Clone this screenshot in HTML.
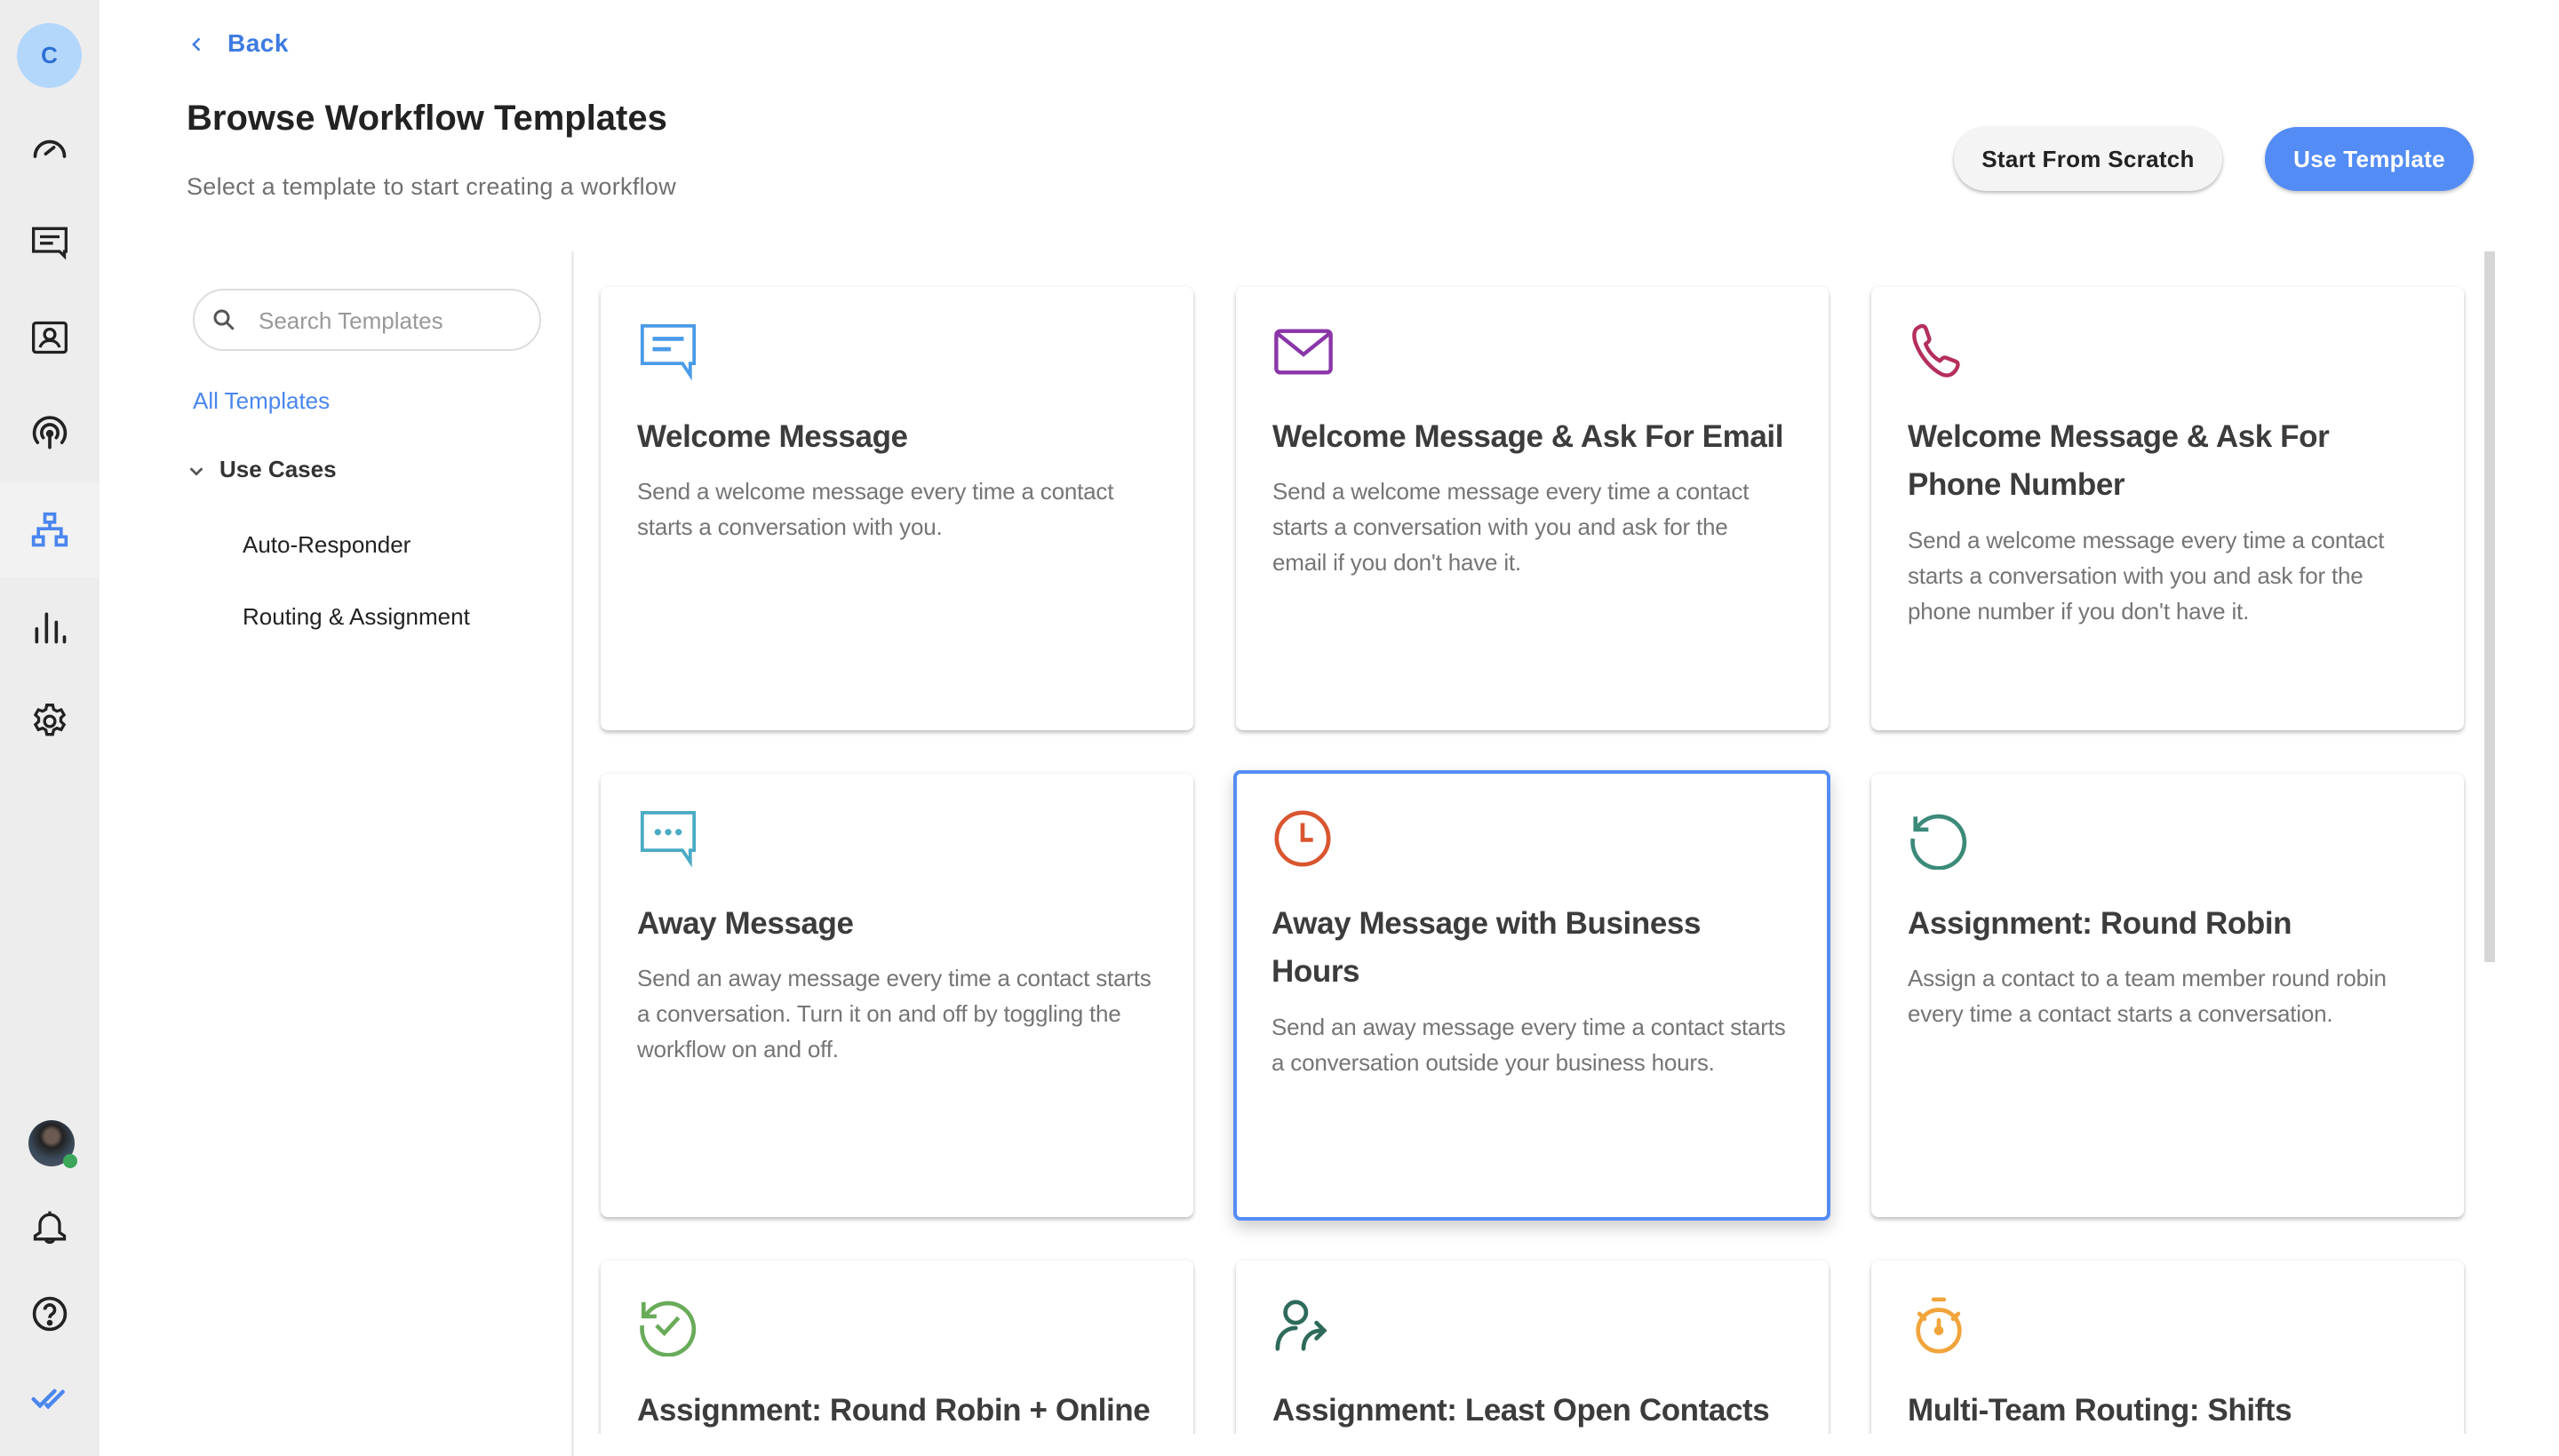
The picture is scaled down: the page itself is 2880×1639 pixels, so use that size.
<!DOCTYPE html>
<html><head><meta charset="utf-8">
<style>
*{box-sizing:border-box;margin:0;padding:0}
html,body{width:2880px;height:1639px;overflow:hidden;background:#fff;font-family:"Liberation Sans",sans-serif}
#root{position:relative;width:2880px;height:1639px;overflow:hidden}
.side{position:absolute;left:0;top:0;width:112px;height:1639px;background:#ededed}
.act{position:absolute;left:0;top:544px;width:112px;height:106px;background:#f2f2f2}
.ic{position:absolute;left:34px;width:44px;height:44px}
.av{position:absolute;left:19px;top:26px;width:73px;height:73px;border-radius:50%;background:#b3d7fb;color:#2d6fd6;font-size:26px;font-weight:bold;text-align:center;line-height:73px}
.t{position:absolute;white-space:nowrap}
.btn{position:absolute;top:143px;height:72px;border-radius:36px;font-size:26px;font-weight:bold;text-align:center;line-height:72px;letter-spacing:.3px}
.card{position:absolute;width:667px;height:499px;background:#fff;border-radius:8px;box-shadow:0 3px 5px rgba(0,0,0,.22),0 0 6px rgba(0,0,0,.06);padding:0 41px;overflow:hidden}
.card svg{position:absolute;left:41px;top:38px;width:70px;height:70px}
.card h3{position:absolute;left:41px;top:142px;font-size:35px;line-height:54px;font-weight:bold;color:#3c3c3c;letter-spacing:-.4px;white-space:nowrap}
.card p{position:absolute;left:41px;font-size:26px;line-height:40px;color:#757575;letter-spacing:-.2px;white-space:nowrap}
.sel{border:4px solid #548cf5;box-shadow:0 8px 18px rgba(0,0,0,.2)}
</style></head><body><div id="root">
<div class="side">
<div class="av">C</div>
<div class="act"></div>
<svg class="ic" style="top:143px" viewBox="0 0 24 24" fill="none" stroke="#222" stroke-width="2" stroke-linecap="round"><path d="M3 18a9 9 0 1 1 18 0"/><path d="M9.5 16.5l5-4"/></svg>
<svg class="ic" style="top:250px" viewBox="0 0 24 24" fill="none" stroke="#222" stroke-width="1.8"><path d="M2 4h20v14h-1v3l-3-3H2z"/><path d="M6 9h12M6 13h8"/></svg>
<svg class="ic" style="top:358px" viewBox="0 0 24 24" fill="none" stroke="#222" stroke-width="1.8"><rect x="2" y="3" width="20" height="18" rx="1.5"/><circle cx="12" cy="10" r="3.2"/><path d="M6 18c1-3 3.5-4.2 6-4.2s5 1.2 6 4.2"/></svg>
<svg class="ic" style="top:467px" viewBox="0 0 24 24" fill="none" stroke="#222" stroke-width="2" stroke-linecap="round"><path d="M4.5 17a9.5 9.5 0 1 1 15 0"/><path d="M8 14a5 5 0 1 1 8 0"/><circle cx="12" cy="11.5" r="1.3" fill="#222"/><path d="M12 12v8"/></svg>
<svg class="ic" style="top:575px" viewBox="0 0 24 24" fill="none" stroke="#4a86ee" stroke-width="2"><rect x="9" y="2" width="6" height="5"/><rect x="2" y="16" width="6" height="5"/><rect x="16" y="16" width="6" height="5"/><path d="M12 7v4M5 16v-5h14v5"/></svg>
<svg class="ic" style="top:684px" viewBox="0 0 24 24" fill="none" stroke="#222" stroke-width="2" stroke-linecap="round"><path d="M4 21v-8M10 21V4M16 21v-12M21 21v-3"/></svg>
<svg class="ic" style="top:790px" viewBox="0 0 24 24" fill="none" stroke="#222" stroke-width="1.8"><circle cx="12" cy="12" r="3.2"/><path d="M10.2 2h3.6l.6 2.7 2 1.1 2.6-.9 1.8 3.1-2 1.9v2.2l2 1.9-1.8 3.1-2.6-.9-2 1.1-.6 2.7h-3.6l-.6-2.7-2-1.1-2.6.9-1.8-3.1 2-1.9v-2.2l-2-1.9 1.8-3.1 2.6.9 2-1.1z"/></svg>
<div style="position:absolute;left:32px;top:1261px;width:52px;height:52px;border-radius:50%;background:radial-gradient(circle at 50% 35%,#6a5a50 0 18%,#222 30%,#3a4a5a 60%,#556 100%)"></div>
<div style="position:absolute;left:71px;top:1299px;width:16px;height:16px;border-radius:50%;background:#3ca65a"></div>
<svg class="ic" style="top:1360px" viewBox="0 0 24 24" fill="none" stroke="#222" stroke-width="1.8"><path d="M12 2v2M6 15V10a6 6 0 0 1 12 0v5l3 2v2H3v-2z"/><path d="M9.5 19a2.5 2 0 0 0 5 0"/></svg>
<svg class="ic" style="top:1457px" viewBox="0 0 24 24" fill="none" stroke="#222" stroke-width="2"><circle cx="12" cy="12" r="9.5"/><path d="M9 9.5a3 3 0 1 1 4.5 2.6c-1 .6-1.5 1.2-1.5 2.4"/><circle cx="12" cy="17.5" r=".8" fill="#222"/></svg>
<svg class="ic" style="top:1553px" viewBox="0 0 24 24" fill="none" stroke="#4a86ee" stroke-width="2.4" stroke-linecap="round"><path d="M2 12l4 4 9-9M10 15.5l1 1 9-9"/></svg>
</div>

<svg style="position:absolute;left:212px;top:40px;width:20px;height:20px" viewBox="0 0 24 24" fill="none" stroke="#3d7be0" stroke-width="3"><path d="M15 4l-8 8 8 8"/></svg>
<div class="t" style="left:256px;top:33px;font-size:28px;color:#3d7be0;font-weight:bold;letter-spacing:.5px">Back</div>
<div class="t" style="left:210px;top:111px;font-size:40px;color:#222;font-weight:bold">Browse Workflow Templates</div>
<div class="t" style="left:210px;top:195px;font-size:27px;color:#707070;letter-spacing:.3px">Select a template to start creating a workflow</div>

<div class="btn" style="left:2199px;width:302px;background:#f4f4f4;color:#222;box-shadow:0 2px 4px rgba(0,0,0,.3)">Start From Scratch</div>
<div class="btn" style="left:2549px;width:235px;background:#548cf5;color:#fff;box-shadow:0 2px 4px rgba(0,0,0,.25)">Use Template</div>

<div style="position:absolute;left:643px;top:283px;width:3px;height:1356px;background:#ececec"></div>
<div style="position:absolute;left:217px;top:325px;width:392px;height:70px;border:2px solid #dcdcdc;border-radius:35px"></div>
<svg style="position:absolute;left:237px;top:345px;width:30px;height:30px" viewBox="0 0 24 24" fill="none" stroke="#555" stroke-width="2.4"><circle cx="10" cy="10" r="6"/><path d="M14.5 14.5l6 6"/></svg>
<div class="t" style="left:291px;top:346px;font-size:26px;color:#999">Search Templates</div>
<div class="t" style="left:217px;top:436px;font-size:26px;color:#4a86ee">All Templates</div>
<svg style="position:absolute;left:210px;top:519px;width:22px;height:22px" viewBox="0 0 24 24" fill="none" stroke="#555" stroke-width="3"><path d="M5 9l7 7 7-7"/></svg>
<div class="t" style="left:247px;top:513px;font-size:26px;color:#333;font-weight:bold">Use Cases</div>
<div class="t" style="left:273px;top:598px;font-size:26px;color:#222">Auto-Responder</div>
<div class="t" style="left:273px;top:679px;font-size:26px;color:#222">Routing &amp; Assignment</div>

<div style="position:absolute;left:2796px;top:283px;width:12px;height:800px;background:#d6d6d6"></div>

<div class="card" style="left:676px;top:323px">
<svg viewBox="0 0 24 24" fill="none" stroke="#4a9be8" stroke-width="1.3"><path d="M2 2h20v14.5h-1.5V21l-3-4.5H2z"/><path d="M6 7h12M6 11h7" stroke-width="1.6"/></svg>
<h3>Welcome Message</h3><p style="top:210px">Send a welcome message every time a contact<br>starts a conversation with you.</p></div>
<div class="card" style="left:1391px;top:323px">
<svg viewBox="0 0 24 24" fill="none" stroke="#8a35a8" stroke-width="1.5"><rect x="1.5" y="4" width="21" height="16" rx="1.5"/><path d="M2 5l10 8 10-8"/></svg>
<h3>Welcome Message &amp; Ask For Email</h3><p style="top:210px">Send a welcome message every time a contact<br>starts a conversation with you and ask for the<br>email if you don't have it.</p></div>
<div class="card" style="left:2106px;top:323px">
<svg viewBox="0 0 24 24" fill="none" stroke="#b52f5a" stroke-width="1.5" stroke-linejoin="round"><path d="M3.5 3c2-1.5 3-1 3.5 0l1.3 3.8c.3 1-.5 1.5-1.4 2.2 1 2.7 3 5 5.5 6.5.8-.8 1.4-1.6 2.4-1.2l3.7 1.4c1 .4 1.3 1.5 0 3.4-1.5 2.2-3.5 2.4-5.5 1.5C9 18.5 5 14 3 8.5 2.3 6.3 2.3 4 3.5 3z"/></svg>
<h3>Welcome Message &amp; Ask For<br>Phone Number</h3><p style="top:265px">Send a welcome message every time a contact<br>starts a conversation with you and ask for the<br>phone number if you don't have it.</p></div>

<div class="card" style="left:676px;top:871px">
<svg viewBox="0 0 24 24" fill="none" stroke="#4aabc4" stroke-width="1.3"><path d="M2 2h20v14.5h-1.5V21l-3-4.5H2z"/><circle cx="8" cy="9.5" r=".6" fill="#4aabc4"/><circle cx="12" cy="9.5" r=".6" fill="#4aabc4"/><circle cx="16" cy="9.5" r=".6" fill="#4aabc4"/></svg>
<h3>Away Message</h3><p style="top:210px">Send an away message every time a contact starts<br>a conversation. Turn it on and off by toggling the<br>workflow on and off.</p></div>
<div class="card sel" style="left:1388px;top:867px;width:672px;height:507px;padding:0">
<svg viewBox="0 0 24 24" fill="none" stroke="#d9552f" stroke-width="1.6" style="left:39px;top:38px"><circle cx="12" cy="12" r="10"/><path d="M12 6v6.5h4"/></svg>
<h3 style="left:39px">Away Message with Business<br>Hours</h3><p style="left:39px;top:265px">Send an away message every time a contact starts<br>a conversation outside your business hours.</p></div>
<div class="card" style="left:2106px;top:871px">
<svg viewBox="0 0 24 24" fill="none" stroke="#3b8a7a" stroke-width="1.6"><path d="M3.5 8A10 10 0 1 1 2 12"/><path d="M3 3.5v5h5"/></svg>
<h3>Assignment: Round Robin</h3><p style="top:210px">Assign a contact to a team member round robin<br>every time a contact starts a conversation.</p></div>

<div class="card" style="left:676px;top:1419px;height:260px">
<svg viewBox="0 0 24 24" fill="none" stroke="#6aab5a" stroke-width="1.6"><path d="M3.5 8A10 10 0 1 1 2 12"/><path d="M2.5 3v5.5h5"/><path d="M7.5 12l3 3 5.5-6"/></svg>
<h3>Assignment: Round Robin + Online</h3></div>
<div class="card" style="left:1391px;top:1419px;height:260px">
<svg viewBox="0 0 24 24" fill="none" stroke="#2e6a5a" stroke-width="1.6" stroke-linecap="round"><circle cx="9" cy="7" r="4"/><path d="M2 21c0-5 3-8 7-8"/><path d="M12 21c0-4 2.5-7 7-7"/><path d="M17 11l3 3-3 3"/></svg>
<h3>Assignment: Least Open Contacts</h3></div>
<div class="card" style="left:2106px;top:1419px;height:260px">
<svg viewBox="0 0 24 24" fill="none" stroke="#f0a43a" stroke-width="1.6" stroke-linecap="round"><circle cx="12" cy="14" r="8"/><path d="M10 2h4M12 10v4M4.5 7.5l2 2M19.5 7.5l-2 2"/><circle cx="12" cy="14" r="1" fill="#f0a43a"/></svg>
<h3>Multi-Team Routing: Shifts</h3></div>
<div style="position:absolute;left:650px;top:1614px;width:2230px;height:25px;background:#fff"></div>
</div></body></html>
